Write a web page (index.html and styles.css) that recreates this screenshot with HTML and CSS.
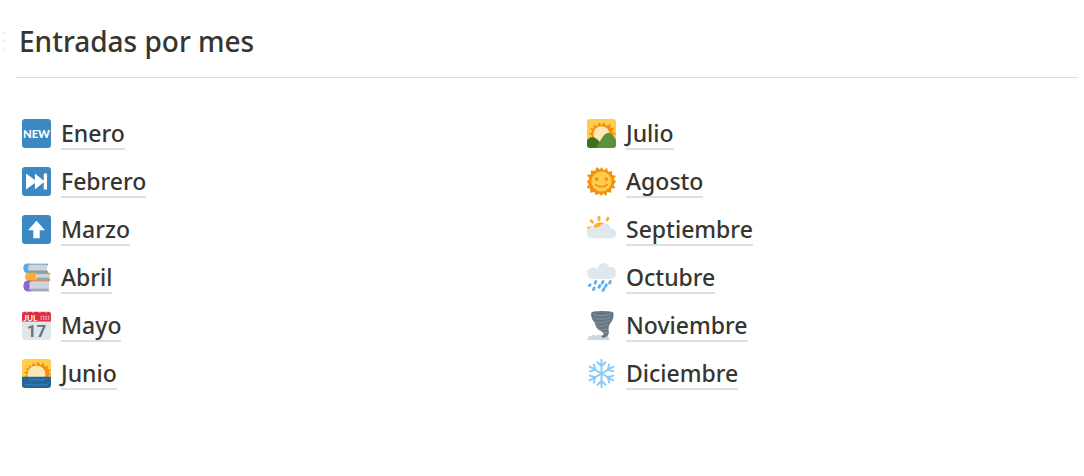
FILE: index.html
```html
<!DOCTYPE html>
<html lang="es">
<head>
<meta charset="utf-8">
<meta name="viewport" content="width=device-width, initial-scale=1">
<title>Entradas por mes</title>
<link rel="stylesheet" href="styles.css">
</head>
<body>
<main class="page">
  <header class="heading">
    <svg class="handle" viewBox="0 0 6 22" aria-hidden="true"><circle cx="4" cy="2" r="2"/><circle cx="4" cy="10" r="2"/><circle cx="4" cy="18" r="2"/></svg>
    <h1 class="title">Entradas por mes</h1>
  </header>
  <div class="columns">
    <ul class="months">
      <li class="month">
        <svg class="icon" viewBox="0 0 36 36" aria-hidden="true"><rect width="36" height="36" rx="4" fill="#3b88c3"/><text class="icon-new" x="18" y="23" text-anchor="middle">NEW</text></svg>
        <a class="link" href="#enero">Enero</a>
      </li>
      <li class="month">
        <svg class="icon" viewBox="0 0 36 36" aria-hidden="true"><rect width="36" height="36" rx="4" fill="#3b88c3"/><path fill="#fff" d="M5 8l11 8V8l11 9V8h4v20h-4v-9l-11 9v-8L5 28z"/></svg>
        <a class="link" href="#febrero">Febrero</a>
      </li>
      <li class="month">
        <svg class="icon" viewBox="0 0 36 36" aria-hidden="true"><rect width="36" height="36" rx="4" fill="#3b88c3"/><path fill="#fff" d="M18 7L7.500 19H14v10h8V19h6.500z"/></svg>
        <a class="link" href="#marzo">Marzo</a>
      </li>
      <li class="month">
        <svg class="icon" viewBox="0 0 36 36" aria-hidden="true">
          <path fill="#3b88c3" d="M5 1h27v2H6v7h26v2H5Q2 11 2 6.500T5 1z"/><path fill="#99aab5" d="M7 2h24v9H7Q5 6 7 2z"/><path fill="#ccd6dd" d="M8 2h23v7H8z"/><path fill="#55acee" d="M5 1h5Q7 3 7 6.500T10 12H5Q2 11 2 6.500T5 1z"/>
          <path fill="#f4900c" d="M7 12h28v2H9v6h26v2H7q-3-1-3-5t3-5z"/><path fill="#99aab5" d="M18 14h16v6H18z"/><path fill="#ccd6dd" d="M18 14h16v4H18z"/><path fill="#ffac33" d="M7 12h13q-3 2-3 5t3 5H7q-3-1-3-5t3-5z"/>
          <path fill="#744eaa" d="M6 22h28v1H9v11h25v1H6q-4-1-4-6.500T6 22z"/><path fill="#99aab5" d="M9 23h24v11H9z"/><path fill="#ccd6dd" d="M10 23h23v9H10z"/><path fill="#9266cc" d="M6 22h6q-4 2-4 6.500t4 6.500H6q-4-1-4-6.500T6 22z"/>
        </svg>
        <a class="link" href="#abril">Abril</a>
      </li>
      <li class="month">
        <svg class="icon" viewBox="0 0 36 36" aria-hidden="true"><path fill="#e0e7ec" d="M0 9h36v23a4 4 0 0 1-4 4H4a4 4 0 0 1-4-4z"/><path fill="#dd2e44" d="M3 1h29a3 3 0 0 1 4 3v9H0V4a3 3 0 0 1 3-3z"/><path fill="#f5f8fa" d="M5 0h2v2H5zM13 0h2v2h-2zM21 0h2v2h-2zM29 0h2v2h-2z"/><text class="icon-jul" x="2" y="12">JUL</text><path fill="#f4abba" d="M23 6h2v2h-2zM26 6h2v2h-2zM29 6h2v2h-2zM32 6h2v2h-2zM23 9h2v2h-2zM26 9h2v2h-2zM29 9h2v2h-2zM32 9h2v2h-2z"/><text class="icon-day" x="18" y="32" text-anchor="middle">17</text></svg>
        <a class="link" href="#mayo">Mayo</a>
      </li>
      <li class="month">
        <svg class="icon" viewBox="0 0 36 36" aria-hidden="true"><rect width="36" height="36" rx="4" fill="#ffcc4d"/><path fill="#f4900c" d="M3 22l4-3-5-2 5-2-3-4 5 1-1-5 4 3 2-6 3 4 3-5 3 5 4-4 1 6 4-2 0 5 4 0-3 4 4 2-5 2 4 2z"/><circle cx="18" cy="19" r="11" fill="#ffe8b6"/><path fill="#226699" d="M0 22h36v10a4 4 0 0 1-4 4H4a4 4 0 0 1-4-4z"/><path fill="none" stroke="#55acee" stroke-opacity=".35" stroke-width="1.500" d="M8 25q3 3 6 0 3 3 6 0 3 3 8 0M4 31q4 3 7 0 4 3 7 0 4 3 7 0 4 3 7 0"/></svg>
        <a class="link" href="#junio">Junio</a>
      </li>
    </ul>
    <ul class="months">
      <li class="month">
        <svg class="icon" viewBox="0 0 36 36" aria-hidden="true"><rect width="36" height="36" rx="4" fill="#ffcc4d"/><path fill="#f4900c" d="M3 25l4-4-5-3 5-2-3-5 5 1-1-5 5 2 2-5 3 4 3-4 3 5 5-3 0 5 5 0-3 5 5 2-5 3 4 4z"/><circle cx="18" cy="19" r="10" fill="#ffe8b6"/><path fill="#3e721d" d="M0 26q5-5 9-3 5 2 13 13H4a4 4 0 0 1-4-4z"/><path fill="#5c913b" d="M12 36q7-17 14-19 5 0 10 9v6a4 4 0 0 1-4 4z"/></svg>
        <a class="link" href="#julio">Julio</a>
      </li>
      <li class="month">
        <svg class="icon" viewBox="0 0 36 36" aria-hidden="true"><path fill="#f4900c" d="M18 0l3 4 4-3 1 5 5-1 0 5 5 1-3 4 3 3-3 4 2 4-5 1 0 5-5-1-1 5-4-3-2 3-3-3-4 2-2-4-5 1 0-5-5-1 3-4-2-4 3-3-3-5 5-1 0-5 5 1 2-5 4 3z"/><circle cx="18" cy="18" r="12.500" fill="#ffcc4d"/><circle cx="12" cy="15" r="2.300" fill="#f4900c"/><circle cx="24" cy="15" r="2.300" fill="#f4900c"/><path fill="none" stroke="#f4900c" stroke-width="2" stroke-linecap="round" d="M11 22q7 5 14 0"/></svg>
        <a class="link" href="#agosto">Agosto</a>
      </li>
      <li class="month">
        <svg class="icon" viewBox="0 0 36 36" aria-hidden="true"><path fill="none" stroke="#ffac33" stroke-width="3.500" stroke-linecap="round" d="M15 3v3M5 7l2 2M2 16h3M26 4l-1 2"/><path fill="#ffac33" d="M7 19q0-9 9-10 6 0 7 5L12 20z"/><path fill="#e1e8ed" d="M7 29a7 7 0 0 1-1-14q3-1 5 1 1-2 4-1 2-4 7-4 7 0 8 6 6 1 6 6 0 6-6 6z"/></svg>
        <a class="link" href="#septiembre">Septiembre</a>
      </li>
      <li class="month">
        <svg class="icon" viewBox="0 0 36 36" aria-hidden="true"><path fill="#e1e8ed" d="M8 20a7 7 0 0 1-8-7q0-6 6-7 4-1 7 1Q15 0 20 0t7 5q9-1 9 7 0 8-8 8z"/><path fill="none" stroke="#5dadec" stroke-width="3.500" stroke-linecap="round" d="M11 23l-1 2M20 23l-1 2M4 27l-1 1M16 28l-1 2M24 27l-1 2M9 31l-1 2M21 32l-1 2M29 23l-1 2"/></svg>
        <a class="link" href="#octubre">Octubre</a>
      </li>
      <li class="month">
        <svg class="icon" viewBox="0 0 36 36" aria-hidden="true"><path fill="#ccd6dd" d="M1 36q-1-5 4-5 3-3 6 0 3-3 6-1 3-2 6 1 4-1 5 5z"/><path fill="#66757f" d="M5 3q0-3 14-3t14 3q0 8-4 12-3 4-2 10 1 5-5 8-5 1-4-2 5-2 1-5Q10 22 10 15 5 10 5 3z"/><path fill="none" stroke="#99aab5" stroke-opacity=".6" stroke-width="1.200" d="M7 4q12 4 24-1M7 8q11 5 23-1M10 13q9 4 18-2M11 18q7 3 15-1M14 23q6 2 11-1M20 27q3 1 6-1"/></svg>
        <a class="link" href="#noviembre">Noviembre</a>
      </li>
      <li class="month">
        <svg class="icon" viewBox="0 0 36 36" aria-hidden="true"><g fill="none" stroke="#88c9f9" stroke-width="2.400" stroke-linecap="round"><path id="arm" d="M18 18V1M13 4l5 5 5-5"/><use href="#arm" transform="rotate(60 18 18)"/><use href="#arm" transform="rotate(120 18 18)"/><use href="#arm" transform="rotate(180 18 18)"/><use href="#arm" transform="rotate(240 18 18)"/><use href="#arm" transform="rotate(300 18 18)"/></g></svg>
        <a class="link" href="#diciembre">Diciembre</a>
      </li>
    </ul>
  </div>
</main>
</body>
</html>
```
FILE: styles.css
```css
* {
  box-sizing: border-box;
}

body {
  margin: 0;
  background: #fff;
  color: #37352f;
  font-family: "Noto Sans", "Open Sans", sans-serif;
  font-weight: 500;
}

.page {
  padding: 21px 6px 60px 0;
}

.heading {
  display: flex;
  align-items: center;
  gap: 13px;
  position: relative;
  padding-bottom: 16px;
}

.heading::after {
  content: "";
  position: absolute;
  right: 0;
  bottom: 0;
  left: 16px;
  height: 1px;
  background: #dededd;
}

.handle {
  width: 6px;
  height: 22px;
  fill: #f7f7f7;
}

.title {
  margin: 0;
  font-size: 28px;
  font-weight: 500;
  line-height: 41px;
}

.columns {
  display: grid;
  grid-template-columns: 1fr 1fr;
  gap: 68px;
  padding: 32px 0 0 16px;
}

.months {
  margin: 0;
  padding: 0 6px;
  list-style: none;
}

.month {
  display: flex;
  align-items: center;
  gap: 10px;
  height: 48px;
}

.icon {
  flex: none;
  width: 29px;
  height: 29px;
  margin-bottom: 2px;
}

.link {
  border-bottom: 2px solid #dfdfde;
  color: inherit;
  font-size: 23px;
  line-height: 30px;
  text-decoration: none;
}

.icon-new {
  fill: #fff;
  font: 900 14px Lato, sans-serif;
}

.icon-jul {
  fill: #fff;
  font: 700 10px Lato, sans-serif;
}

.icon-day {
  fill: #66757f;
  font: 700 21px Roboto, sans-serif;
}
```
